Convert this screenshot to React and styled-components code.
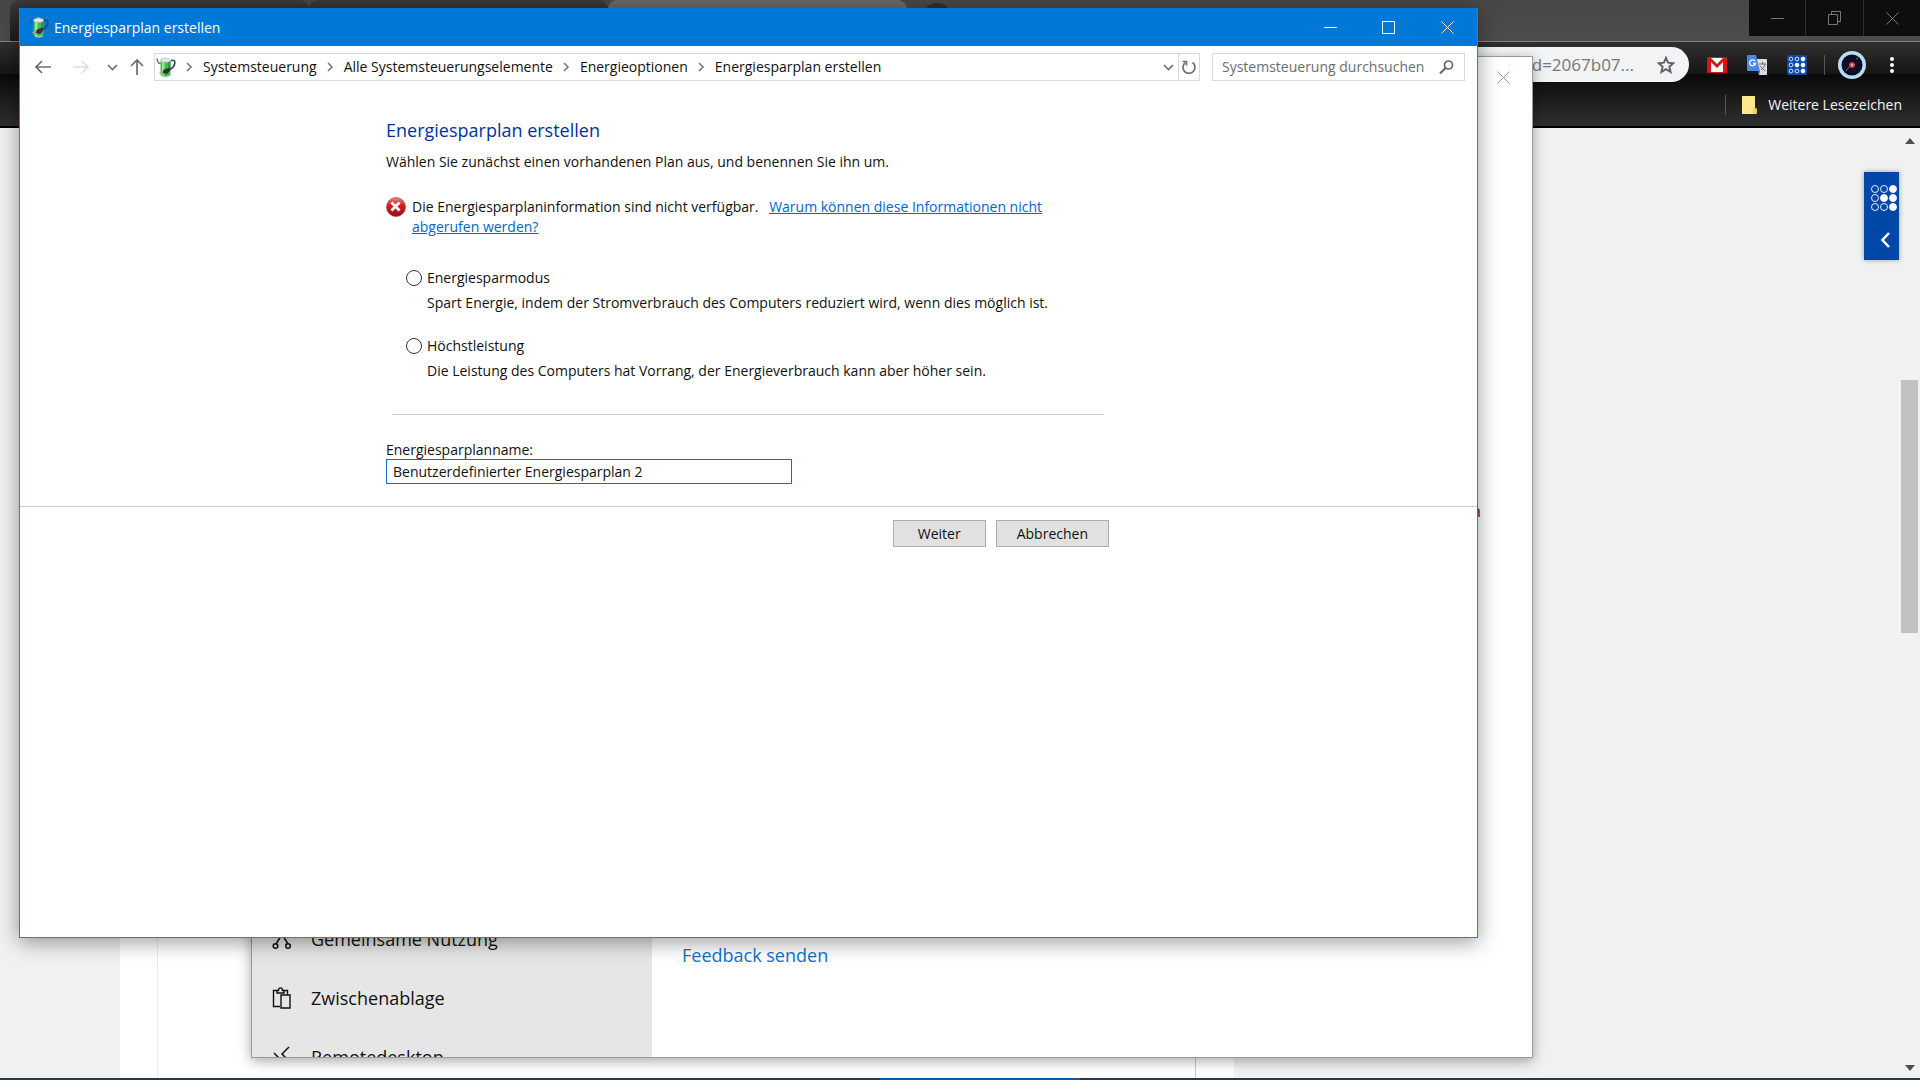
import React, { useState } from "react";
import styled, { createGlobalStyle } from "styled-components";

const GlobalStyle = createGlobalStyle`
    * {
        box-sizing: border-box;
    }
    body {
        margin: 0;
        overflow: hidden;
        font-family: "Open Sans", "Noto Sans", sans-serif;
        font-size: 14px;
        line-height: 20px;
        color: #111;
    }
    button, input {
        font: inherit;
        color: inherit;
        margin: 0;
    }
    svg {
        display: block;
        flex: none;
    }
`;

const Desktop = styled.div`
    position: relative;
    display: flex;
    flex-direction: column;
    height: 100vh;
    overflow: hidden;
    background: #f1f1f1;
`;

const IconButton = styled.button`
    display: flex;
    align-items: center;
    justify-content: center;
    flex: none;
    width: ${(props) => props.$width || 20}px;
    height: ${(props) => props.$height || 20}px;
    padding: 0;
    border: none;
    background: none;
    color: ${(props) => props.$color || "inherit"};
`;

/* ---------- browser ---------- */

const TabStrip = styled.div`
    display: flex;
    height: 42px;
    padding-left: 10px;
    background: linear-gradient(#474747, #4c4c4c);
    border-bottom: 1px solid #808080;
`;

const Tab = styled.div`
    width: 299px;
    border-radius: 9px 9px 0 0;
    background: ${(props) => (props.$active ? "#696969" : "linear-gradient(#3a3a3a, #1c1c1c)")};
`;

const NewTab = styled.button`
    width: 28px;
    height: 28px;
    margin: 3px 0 0 16px;
    padding: 0;
    border: none;
    border-radius: 14px;
    background: #2e2e2e;
`;

const BrowserControls = styled.div`
    display: flex;
    height: 36px;
    margin-left: auto;
    background: #0e0e0e;
    color: #777;

    button + button {
        border-left: 1px solid #2e2e2e;
    }
`;

/* one background for both bars, the address field reaches into the lower one */
const Bars = styled.div`
    background: linear-gradient(#303030, #151515 32px, #050505 33px, #0b0b0b 34px, #303030);
    border-bottom: 2px solid #000;
`;

const Toolbar = styled.div`
    display: flex;
    align-items: center;
    height: 33px;
    padding: 0 18px 0 130px;
    color: #fff;
`;

const Omnibox = styled.div`
    display: flex;
    align-items: center;
    flex: 1;
    height: 35px;
    margin: 12px 18px 0 0;
    padding-right: 13px;
    border-radius: 18px;
    background: #f1f3f4;
    color: #5f6368;
`;

const UrlInput = styled.input`
    flex: 1;
    min-width: 0;
    height: 30px;
    padding: 0 22px 0 0;
    border: none;
    background: none;
    color: #74777b;
    font-size: 17px;
    text-align: right;
    outline: none;
`;

const Extensions = styled.div`
    display: flex;
    align-items: center;
    gap: 20px;
    margin: 12px 17px 0 0;
`;

const Profile = styled.div`
    display: flex;
    align-items: center;
    gap: 16px;
    height: 20px;
    margin-top: 12px;
    padding-left: 13px;
    border-left: 1px solid #555;
`;

const BookmarkBar = styled.div`
    display: flex;
    align-items: center;
    justify-content: flex-end;
    height: 51px;
    padding: 8px 18px 0 0;
    color: #f4f4f4;
`;

const BookmarkFolder = styled.button`
    display: flex;
    align-items: center;
    gap: 11px;
    height: 20px;
    padding: 0 0 0 15px;
    border: none;
    border-left: 1px solid #555;
    background: none;
`;

const Page = styled.div`
    position: relative;
    display: flex;
    flex: 1;
    min-height: 0;
`;

const PageBody = styled.div`
    flex: 1;
    margin: 0 665px 0 120px;
    padding: 0 38px 0 37px;
    background: #fff;
`;

const PageColumn = styled.div`
    height: 100%;
    border-left: 1px solid #e9e9e9;
    border-right: 1px solid #c8c8c8;
`;

const SideTab = styled.button`
    position: absolute;
    top: 44px;
    right: 21px;
    display: flex;
    flex-direction: column;
    align-items: flex-end;
    gap: 21px;
    width: 35px;
    height: 88px;
    padding: 13px 2px 0 0;
    border: none;
    background: #0047a8;
    box-shadow: 0 0 5px rgba(0, 0, 0, 0.35);
`;

const Scrollbar = styled.div`
    display: flex;
    flex-direction: column;
    align-items: center;
    width: 21px;
    padding: 10px 0 7px;
    background: #f1f1f1;
    color: #505050;
`;

const ScrollTrack = styled.div`
    display: flex;
    flex-direction: column;
    flex: 1;
`;

const ScrollThumb = styled.div`
    width: 17px;
    height: 253px;
    margin-top: 236px;
    background: #c1c1c1;
`;

const Taskbar = styled.div`
    display: flex;
    height: 2px;
    padding-left: 880px;
    background: #22394f;
`;

const TaskbarItem = styled.div`
    width: 200px;
    background: #0b5a9d;
`;

/* ---------- settings window ---------- */

const SettingsWindow = styled.section`
    position: absolute;
    top: 56px;
    right: 387px;
    bottom: 22px;
    left: 251px;
    display: flex;
    overflow: hidden;
    background: #fff;
    border: 1px solid #9a9a9a;
    box-shadow: 0 3px 12px rgba(0, 0, 0, 0.35);
    font-size: 18px;
`;

const SettingsNav = styled.nav`
    display: flex;
    flex-direction: column;
    justify-content: flex-end;
    width: 400px;
    margin-bottom: -29px;
    background: #e6e6e6;
`;

const SettingsNavItem = styled.a`
    display: flex;
    align-items: center;
    gap: 19px;
    height: 59px;
    padding-left: 20px;
    color: #111;
    text-decoration: none;
`;

const SettingsMain = styled.div`
    display: flex;
    flex-direction: column;
    flex: 1;
    padding-left: 30px;
`;

const SettingsClose = styled.div`
    display: flex;
    justify-content: flex-end;
    height: 40px;
`;

const SettingsText = styled.p`
    margin: 404px 51px auto 0;
    color: #333;
    font-size: 17px;
    text-align: right;
`;

const FeedbackLink = styled.a`
    margin-bottom: 92px;
    color: #0a74d0;
    text-decoration: none;
`;

/* ---------- control panel window ---------- */

const PanelWindow = styled.main`
    position: absolute;
    top: 8px;
    right: 442px;
    bottom: 142px;
    left: 19px;
    display: flex;
    flex-direction: column;
    background: #fff;
    border: 1px solid #2f7fba;
    border-top-color: #0078d7;
    box-shadow: 0 4px 20px rgba(0, 0, 0, 0.4);
`;

const TitleBar = styled.header`
    display: flex;
    align-items: center;
    gap: 5px;
    height: 37px;
    padding-left: 9px;
    background: #0078d7;
    color: #fff;
`;

const WindowControls = styled.div`
    display: flex;
    margin-left: auto;
`;

const NavRow = styled.div`
    display: flex;
    align-items: center;
    padding: 7px 12px 7px 8px;
    color: #6d6d6d;
`;

const NavButtons = styled.div`
    display: flex;
    align-items: center;
`;

const AddressBar = styled.div`
    display: flex;
    align-items: center;
    flex: 1;
    height: 28px;
    margin-right: 12px;
    padding-left: 1px;
    border: 1px solid #d9d9d9;
`;

const Crumbs = styled.nav`
    display: flex;
    align-items: center;
    flex: 1;
`;

const Crumb = styled.a`
    color: #111;
    text-decoration: none;
`;

const RefreshBox = styled.div`
    display: flex;
    align-items: center;
    height: 26px;
    border-left: 1px solid #d9d9d9;
`;

const SearchBox = styled.label`
    display: flex;
    align-items: center;
    width: 253px;
    height: 28px;
    padding: 0 10px 0 9px;
    border: 1px solid #d9d9d9;
`;

const SearchInput = styled.input`
    flex: 1;
    min-width: 0;
    padding: 0;
    border: none;
    outline: none;

    &::placeholder {
        color: #6d6d6d;
    }
`;

const Form = styled.form`
    margin: 0;
`;

const Column = styled.div`
    width: 100%;
    max-width: 725px;
    margin: 0 auto;
`;

const Title = styled.h1`
    margin: 0 0 9px;
    padding-top: 29px;
    color: #003399;
    font-size: 18px;
    font-weight: 400;
    line-height: 26px;
`;

const Text = styled.p`
    margin: 0;
`;

const ErrorRow = styled.div`
    display: flex;
    gap: 6px;
    max-width: 680px;
    margin: 25px 0 31px;
`;

const HelpLink = styled.a`
    margin-left: 7px;
    color: #0066cc;
`;

const Plan = styled.div`
    margin: 0 0 23px 20px;
`;

const PlanLabel = styled.label`
    display: flex;
    align-items: center;
    gap: 5px;
`;

const Radio = styled.input`
    appearance: none;
    width: 16px;
    height: 16px;
    border: 1px solid #333;
    border-radius: 8px;
    background: #fff;

    &:checked {
        box-shadow: inset 0 0 0 3px #fff;
        background: #333;
    }
`;

const PlanText = styled.p`
    margin: 5px 0 0 21px;
`;

const Divider = styled.hr`
    margin: 33px 7px 25px 6px;
    border: none;
    border-top: 1px solid #ccc;
`;

const NameLabel = styled.label`
    display: block;
    height: 19px;
`;

const NameInput = styled.input`
    display: block;
    width: 406px;
    height: 25px;
    padding: 0 6px;
    border: 1px solid #1a70b0;
    outline: none;
`;

const Footer = styled.div`
    margin-top: 22px;
    padding-top: 13px;
    border-top: 1px solid #ccc;
`;

const Actions = styled(Column)`
    display: flex;
    justify-content: flex-end;
    gap: 10px;
    padding-right: 2px;
`;

const ActionButton = styled.button`
    height: 27px;
    min-width: 93px;
    padding: 0 20px;
    border: 1px solid #adadad;
    background: #e1e1e1;
`;

/* ---------- icons ---------- */

const MinimizeIcon = () => (
    <svg width="13" height="13" stroke="currentColor"><path d="M0 6.5h13" /></svg>
);

const MaximizeIcon = () => (
    <svg width="13" height="13" fill="none" stroke="currentColor"><path d="M.5 .5h12v12h-12z" /></svg>
);

const RestoreIcon = () => (
    <svg width="14" height="14" fill="none" stroke="currentColor">
        <path d="M.5 3.5h9v10h-9zM3.5 3.5v-3h9v10h-3" />
    </svg>
);

const CloseIcon = () => (
    <svg width="13" height="13" fill="none" stroke="currentColor"><path d="M.5 .5l12 12M12.5 .5l-12 12" /></svg>
);

const PowerIcon = () => (
    <svg width="20" height="21" viewBox="0 0 20 21" fill="none">
        <path d="M14 4c4-2 5.5 0 4.5 3.5C17.5 11 15 12 13 13" stroke="#33435c" strokeWidth="1.6" />
        <path d="M.8 1.5l1.4 4L4.5 7" stroke="#4b5c6c" strokeWidth="1.2" />
        <path d="M4.5 3v14.5c0 3.3 10 3.3 10 0V3z" fill="#46bd55" />
        <path d="M6 4v14l2.5 1V4z" fill="#9be79a" />
        <path d="M12 4v8h2.5V4z" fill="#2a9a42" />
        <ellipse cx="9.5" cy="3.3" rx="5" ry="2" fill="#e6eceb" stroke="#9aaba6" strokeWidth=".6" />
        <ellipse cx="9.5" cy="1.6" rx="2" ry="1" fill="#cfd8d6" />
        <path d="M6 14.5l3-2.5 5-1.5 .8 2-3 4-4 1z" fill="#333" />
        <path d="M3.5 16l3.5-2M5.5 18.5l3-2" stroke="#cfb07c" strokeWidth="1.4" />
        <path d="M6 19c2 1.5 6 1.5 8-.5" stroke="#c4e4c4" />
    </svg>
);

const ArrowIcon = ({ d }) => (
    <svg width="16" height="16" fill="none" stroke="currentColor" strokeWidth="1.7"><path d={d} /></svg>
);

const CrumbArrow = () => (
    <svg width="27" height="10" fill="none" stroke="#777" strokeWidth="1.6"><path d="M11 1l4 4-4 4" /></svg>
);

const ChevronDown = () => (
    <svg width="11" height="7" fill="none" stroke="currentColor" strokeWidth="1.6"><path d="M1 1l4.5 4.5L10 1" /></svg>
);

const RefreshIcon = () => (
    <svg width="16" height="16" fill="none" stroke="currentColor" strokeWidth="1.7">
        <path d="M11.5 3.5a6 6 0 1 1-7.5 .3M1.5 2.5h4v4" />
    </svg>
);

const SearchIcon = () => (
    <svg width="15" height="15" fill="none" stroke="#666" strokeWidth="1.7">
        <circle cx="9.5" cy="5" r="4" /><path d="M6.5 8L1 13.5" strokeWidth="2.2" />
    </svg>
);

const ErrorIcon = () => (
    <svg width="20" height="20">
        <defs>
            <linearGradient id="err" x1="0" y1="0" x2="0" y2="1">
                <stop offset="0" stopColor="#e88a86" />
                <stop offset=".4" stopColor="#d3201f" />
                <stop offset="1" stopColor="#9c0d10" />
            </linearGradient>
        </defs>
        <circle cx="10" cy="10" r="9.5" fill="url(#err)" stroke="#a33" strokeWidth=".6" />
        <path d="M5.5 5.5l8 8M13.5 5.5l-8 8" stroke="#fff" strokeWidth="2.8" />
    </svg>
);

const StarIcon = () => (
    <svg width="18" height="18" viewBox="0 0 18 18" fill="none" stroke="currentColor" strokeWidth="1.9">
        <path d="M9 1.8l2.1 4.9 5.3 .5-4 3.5 1.2 5.2L9 13.1l-4.6 2.8 1.2-5.2-4-3.5 5.3-.5z" />
    </svg>
);

const GmailIcon = () => (
    <svg width="20" height="16">
        <rect width="20" height="16" rx="1" fill="#d0161b" />
        <path d="M4 5l6 6 6-6v10H4z" fill="#f4f4f4" />
        <path d="M4 1h12l-6 6z" fill="#fff" />
    </svg>
);

const TranslateIcon = () => (
    <svg width="20" height="20">
        <path d="M9 4h10a1 1 0 0 1 1 1v14a1 1 0 0 1-1 1h-7z" fill="#dcdcdc" />
        <path d="M12 9h7M15.5 7v2M18 9c-1 4-3 5-4 6M13.5 11c1 2 3 4 5 5" stroke="#667" fill="none" />
        <path d="M1 0h8l4 16H1a1 1 0 0 1-1-1V1a1 1 0 0 1 1-1z" fill="#4a86e8" />
        <path d="M11 16h2l-1 4z" fill="#2c55b8" />
        <path d="M8 6a3 3 0 1 0 .5 2.5H6" stroke="#fff" strokeWidth="1.3" fill="none" />
    </svg>
);

const filledDots = [2, 4, 5, 8];

const DotGrid = () => (
    <svg width="26" height="26" stroke="#fff" strokeWidth=".9" fill="none">
        {Array.from({ length: 9 }, (_, i) => (
            <circle
                key={i}
                cx={4 + (i % 3) * 9}
                cy={4 + Math.floor(i / 3) * 9}
                r="3.5"
                fill={filledDots.includes(i) ? "#fff" : "none"}
            />
        ))}
    </svg>
);

const DotsExtension = () => (
    <svg width="20" height="20">
        <rect width="20" height="20" rx="1" fill="#0a48ad" />
        <g stroke="#fff" strokeWidth=".8">
            {Array.from({ length: 9 }, (_, i) => (
                <circle
                    key={i}
                    cx={4 + (i % 3) * 6}
                    cy={4 + Math.floor(i / 3) * 6}
                    r="1.9"
                    fill={filledDots.includes(i) ? "#fff" : "none"}
                />
            ))}
        </g>
    </svg>
);

const AvatarIcon = () => (
    <svg width="28" height="28">
        <circle cx="14" cy="14" r="14" fill="#b9ddf5" />
        <circle cx="14" cy="14" r="10.5" fill="#0a0d25" />
        <path d="M8 20l3-4M18 8l2-1" stroke="#a65a4a" />
        <circle cx="14" cy="14" r="3" fill="#e23b3b" />
        <circle cx="14" cy="14" r="1.2" fill="#9fc6f5" />
    </svg>
);

const MenuIcon = () => (
    <svg width="20" height="18" fill="#fff">
        <circle cx="10" cy="3" r="2" /><circle cx="10" cy="9" r="2" /><circle cx="10" cy="15" r="2" />
    </svg>
);

const FolderIcon = () => (
    <svg width="16" height="18">
        <path d="M1 0h13v12l2 1v4l-1 1H1z" fill="#ffe68f" />
        <path d="M12.5 17v-4l1.5-1 1.5 1v4z" fill="#f5d35d" stroke="#d9b53c" strokeWidth=".6" />
    </svg>
);

const ShareIcon = () => (
    <svg width="20" height="24" fill="none" stroke="#111" strokeWidth="1.5">
        <circle cx="10" cy="6" r="3" />
        <path d="M9 9l-5 8M11 9l5 8" />
        <circle cx="3.5" cy="19" r="2.3" /><circle cx="16" cy="19" r="2.3" />
    </svg>
);

const ClipboardIcon = () => (
    <svg width="20" height="22" fill="none" stroke="#111" strokeWidth="1.4">
        <path d="M8 19.5H1.5v-16H5M12 3.5h3.5v4M5 6V3.5h1.5c0-3.5 4-3.5 4 0H12V6z" />
        <path d="M9 8h9v13H9z" />
    </svg>
);

const RemoteIcon = () => (
    <svg width="20" height="22" fill="none" stroke="#111" strokeWidth="1.5">
        <path d="M17 1l-7 7 7 7M2 7l6 6-6 6" />
    </svg>
);

const Triangle = ({ down }) => (
    <svg width="10" height="6" fill="currentColor"><path d={down ? "M0 0h10L5 6z" : "M0 6h10L5 0z"} /></svg>
);

const crumbs = [
    "Systemsteuerung",
    "Alle Systemsteuerungselemente",
    "Energieoptionen",
    "Energiesparplan erstellen",
];

const plans = [
    {
        id: "saver",
        name: "Energiesparmodus",
        text: "Spart Energie, indem der Stromverbrauch des Computers reduziert wird, wenn dies möglich ist.",
    },
    {
        id: "high",
        name: "Höchstleistung",
        text: "Die Leistung des Computers hat Vorrang, der Energieverbrauch kann aber höher sein.",
    },
];

const settingsItems = [
    { name: "Gemeinsame Nutzung", icon: ShareIcon },
    { name: "Zwischenablage", icon: ClipboardIcon },
    { name: "Remotedesktop", icon: RemoteIcon },
];

const Browser = () => (
    <>
        <TabStrip>
            <Tab />
            <Tab />
            <Tab $active />
            <NewTab aria-label="Neuer Tab" />
            <BrowserControls>
                <IconButton $width={56} $height={36} aria-label="Minimieren"><MinimizeIcon /></IconButton>
                <IconButton $width={58} $height={36} aria-label="Wiederherstellen"><RestoreIcon /></IconButton>
                <IconButton $width={57} $height={36} aria-label="Schließen"><CloseIcon /></IconButton>
            </BrowserControls>
        </TabStrip>
        <Bars>
            <Toolbar>
                <Omnibox>
                    <UrlInput aria-label="Adresse" readOnly value="d=2067b07..." />
                    <IconButton aria-label="Lesezeichen"><StarIcon /></IconButton>
                </Omnibox>
                <Extensions>
                    <IconButton aria-label="Gmail"><GmailIcon /></IconButton>
                    <IconButton aria-label="Übersetzer"><TranslateIcon /></IconButton>
                    <IconButton aria-label="Erweiterung"><DotsExtension /></IconButton>
                </Extensions>
                <Profile>
                    <IconButton $width={28} aria-label="Profil"><AvatarIcon /></IconButton>
                    <IconButton aria-label="Menü"><MenuIcon /></IconButton>
                </Profile>
            </Toolbar>
            <BookmarkBar>
                <BookmarkFolder><FolderIcon />Weitere Lesezeichen</BookmarkFolder>
            </BookmarkBar>
        </Bars>
        <Page>
            <PageBody><PageColumn /></PageBody>
            <SideTab aria-label="Seitenleiste">
                <DotGrid />
                <svg width="17" height="16" fill="none" stroke="#fff" strokeWidth="2.5"><path d="M9 1L2.5 8 9 15" /></svg>
            </SideTab>
            <Scrollbar>
                <Triangle />
                <ScrollTrack><ScrollThumb /></ScrollTrack>
                <Triangle down />
            </Scrollbar>
        </Page>
        <Taskbar><TaskbarItem /></Taskbar>
    </>
);

const Settings = () => (
    <SettingsWindow>
        <SettingsNav>
            {settingsItems.map(({ name, icon: Icon }) => (
                <SettingsNavItem href="#" key={name}><Icon />{name}</SettingsNavItem>
            ))}
        </SettingsNav>
        <SettingsMain>
            <SettingsClose>
                <IconButton $width={58} $height={40} $color="#999" aria-label="Schließen"><CloseIcon /></IconButton>
            </SettingsClose>
            <SettingsText>n</SettingsText>
            <FeedbackLink href="#">Feedback senden</FeedbackLink>
        </SettingsMain>
    </SettingsWindow>
);

const App = () => {
    const [plan, setPlan] = useState("");
    const [name, setName] = useState("Benutzerdefinierter Energiesparplan 2");

    return (
        <Desktop>
            <GlobalStyle />
            <Browser />
            <Settings />
            <PanelWindow>
                <TitleBar>
                    <PowerIcon />
                    <span>Energiesparplan erstellen</span>
                    <WindowControls>
                        <IconButton $width={58} $height={36} aria-label="Minimieren"><MinimizeIcon /></IconButton>
                        <IconButton $width={58} $height={36} aria-label="Maximieren"><MaximizeIcon /></IconButton>
                        <IconButton $width={60} $height={36} aria-label="Schließen"><CloseIcon /></IconButton>
                    </WindowControls>
                </TitleBar>
                <NavRow>
                    <NavButtons>
                        <IconButton $width={30} aria-label="Zurück"><ArrowIcon d="M16 8H1M7 2L1 8l6 6" /></IconButton>
                        <IconButton $width={46} $color="#ddd" aria-label="Vorwärts"><ArrowIcon d="M0 8h15M9 2l6 6-6 6" /></IconButton>
                        <IconButton $width={16} aria-label="Verlauf"><ChevronDown /></IconButton>
                        <IconButton $width={34} aria-label="Nach oben"><ArrowIcon d="M8 16V1M2 7l6-6 6 6" /></IconButton>
                    </NavButtons>
                    <AddressBar>
                        <PowerIcon />
                        <Crumbs>
                            {crumbs.map((crumb) => (
                                <React.Fragment key={crumb}>
                                    <CrumbArrow />
                                    <Crumb href="#">{crumb}</Crumb>
                                </React.Fragment>
                            ))}
                        </Crumbs>
                        <IconButton aria-label="Adressen"><ChevronDown /></IconButton>
                        <RefreshBox>
                            <IconButton aria-label="Aktualisieren"><RefreshIcon /></IconButton>
                        </RefreshBox>
                    </AddressBar>
                    <SearchBox>
                        <SearchInput aria-label="Suche" placeholder="Systemsteuerung durchsuchen" />
                        <SearchIcon />
                    </SearchBox>
                </NavRow>
                <Form onSubmit={(e) => e.preventDefault()}>
                    <Column>
                        <Title>Energiesparplan erstellen</Title>
                        <Text>Wählen Sie zunächst einen vorhandenen Plan aus, und benennen Sie ihn um.</Text>
                        <ErrorRow>
                            <ErrorIcon />
                            <Text>
                                Die Energiesparplaninformation sind nicht verfügbar.{" "}
                                <HelpLink href="#">Warum können diese Informationen nicht abgerufen werden?</HelpLink>
                            </Text>
                        </ErrorRow>
                        {plans.map((item) => (
                            <Plan key={item.id}>
                                <PlanLabel>
                                    <Radio
                                        type="radio"
                                        name="plan"
                                        checked={plan === item.id}
                                        onChange={() => setPlan(item.id)}
                                    />
                                    {item.name}
                                </PlanLabel>
                                <PlanText>{item.text}</PlanText>
                            </Plan>
                        ))}
                        <Divider />
                        <NameLabel htmlFor="plan-name">Energiesparplanname:</NameLabel>
                        <NameInput id="plan-name" value={name} onChange={(e) => setName(e.target.value)} />
                    </Column>
                    <Footer>
                        <Actions>
                            <ActionButton type="submit">Weiter</ActionButton>
                            <ActionButton type="button">Abbrechen</ActionButton>
                        </Actions>
                    </Footer>
                </Form>
            </PanelWindow>
        </Desktop>
    );
};

export default App;
